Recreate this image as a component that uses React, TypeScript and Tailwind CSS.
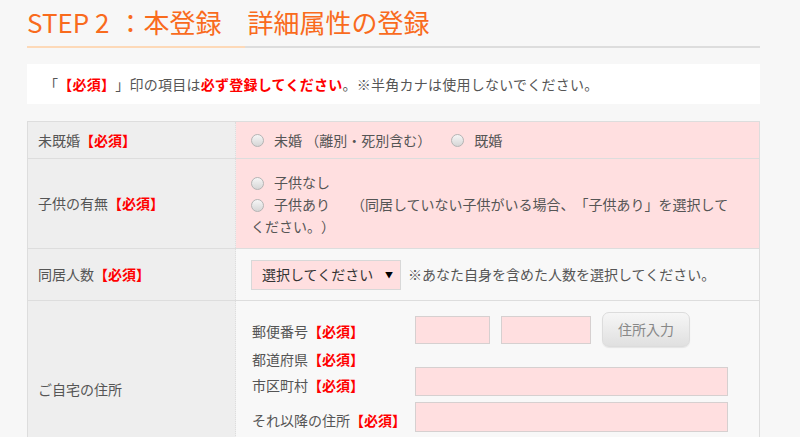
import React from "react";

const Req = () => <span className="text-[#f00] font-bold">【必須】</span>;

function Radio() {
  return (
    <span className="inline-block w-[13px] h-[13px] rounded-full border border-[#b4b4b4] bg-gradient-to-b from-[#f6f6f6] to-[#d6d6d6] align-[-2px] mr-[10px]" />
  );
}

function PinkInput({ className }: { className: string }) {
  return <span className={`block bg-[#ffdfe0] border border-[#d6d0d0] ${className}`} />;
}

export default function App() {
  return (
    <div className="w-[800px] h-[437px] overflow-hidden bg-[#f7f7f7] text-[#555] text-[14px] font-['Noto_Sans_CJK_JP',sans-serif] [text-spacing-trim:space-all]">
      <div className="ml-[27px] w-[733px] pt-[4px]">
        {/* Heading */}
        <h1 className="text-[26px] leading-[36px] text-[#f96b1d] whitespace-nowrap">
          STEP 2<span className="ml-[8px]">：</span>本登録　詳細属性の登録
        </h1>
        <div className="flex mt-[6px] h-[2px]">
          <div className="w-[218px] bg-[#fdd9b8]" />
          <div className="flex-1 bg-[#dddddd]" />
        </div>

        {/* Notice */}
        <div className="mt-[16px] h-[40px] bg-white flex items-center pl-[17px] whitespace-nowrap tracking-[0.25px]">
          「<Req />」印の項目は<span className="text-[#f00] font-bold">必ず登録してください</span>。※半角カナは使用しないでください。
        </div>

        {/* Form table */}
        <div className="mt-[17px] border border-[#dddddd] border-b-0">
          {/* 未既婚 */}
          <div className="grid grid-cols-[208px_1fr] h-[37px] border-b border-[#dddddd]">
            <div className="bg-[#eeeeee] flex items-center pl-[10px] border-r border-dotted border-[#dddddd]">
              未既婚<Req />
            </div>
            <div className="bg-[#ffdfe0] flex items-center pl-[15px]">
              <Radio />
              <span>未婚 （離別・死別含む）</span>
              <span className="ml-[20px]" />
              <Radio />
              <span>既婚</span>
            </div>
          </div>

          {/* 子供の有無 */}
          <div className="grid grid-cols-[208px_1fr] h-[90px] border-b border-[#dddddd]">
            <div className="bg-[#eeeeee] flex items-center pl-[10px] border-r border-dotted border-[#dddddd]">
              子供の有無<Req />
            </div>
            <div className="bg-[#ffdfe0] flex flex-col justify-center pl-[15px] pr-[21px] leading-[22px]">
              <div>
                <Radio />
                子供なし
              </div>
              <div>
                <Radio />
                子供あり
                <span className="ml-[21px]">（同居していない子供がいる場合、「子供あり」を選択してください。）</span>
              </div>
            </div>
          </div>

          {/* 同居人数 */}
          <div className="grid grid-cols-[208px_1fr] h-[52px] border-b border-[#dddddd]">
            <div className="bg-[#eeeeee] flex items-center pl-[10px] border-r border-dotted border-[#dddddd]">
              同居人数<Req />
            </div>
            <div className="bg-[#f8f8f8] flex items-center pl-[15px]">
              <div className="w-[150px] h-[30px] bg-[#ffdfe0] border border-[#d8d8d8] flex items-center justify-between pl-[10px] pr-[7px] text-[#333]">
                <span>選択してください</span>
                <span className="text-[8px] text-black">▼</span>
              </div>
              <span className="ml-[7px]">※あなた自身を含めた人数を選択してください。</span>
            </div>
          </div>

          {/* ご自宅の住所 */}
          <div className="grid grid-cols-[208px_1fr] h-[176px] border-b border-[#dddddd]">
            <div className="bg-[#eeeeee] flex items-center pl-[10px] pt-[2px] border-r border-dotted border-[#dddddd]">
              ご自宅の住所
            </div>
            <div className="bg-[#f8f8f8] pl-[16px] pt-[11px] flex flex-col">
              <div className="flex items-center h-[35px]">
                <span className="w-[163px] pt-[4px]">
                  郵便番号<Req />
                </span>
                <PinkInput className="w-[75px] h-[28px]" />
                <PinkInput className="w-[90px] h-[28px] ml-[11px]" />
                <button className="ml-[11px] w-[88px] h-[35px] rounded-[7px] border border-[#dcdcdc] bg-gradient-to-b from-[#f6f6f6] to-[#e0e0e0] text-[#888] shadow-[0_1px_1px_rgba(0,0,0,0.08)]">
                  住所入力
                </button>
              </div>
              <div className="flex items-center h-[16px] mt-[4px]">
                <span>
                  都道府県<Req />
                </span>
              </div>
              <div className="flex items-center h-[29px]">
                <span className="w-[163px] pt-[7px]">
                  市区町村<Req />
                </span>
                <PinkInput className="w-[313px] h-[29px]" />
              </div>
              <div className="flex items-center h-[30px] mt-[6px]">
                <span className="w-[163px] pt-[6px] whitespace-nowrap">
                  それ以降の住所<Req />
                </span>
                <PinkInput className="w-[313px] h-[30px]" />
              </div>
            </div>
          </div>
        </div>
      </div>
    </div>
  );
}
